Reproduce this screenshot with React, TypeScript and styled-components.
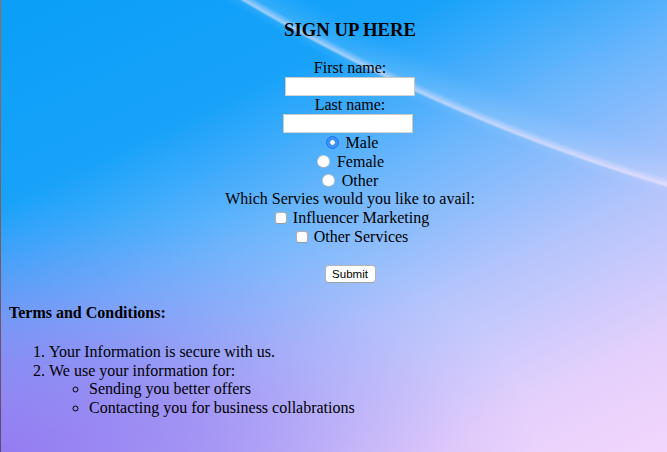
import React from "react";
import styled, { createGlobalStyle } from "styled-components";

const GlobalStyle = createGlobalStyle`
  html, body {
    margin: 0;
    padding: 0;
  }
  body {
    font-family: "Liberation Serif", "Times New Roman", serif;
    font-size: 16px;
    color: #000;
  }
`;

const Page = styled.div`
  box-sizing: border-box;
  width: 100%;
  height: 452px;
  overflow: hidden;
  padding: 19px 8px 0 9px;
  background:
    linear-gradient(to bottom, #a06a52, #7a5860 60%, #5a4a70) 0 0 / 1px 100% no-repeat,
    radial-gradient(
      circle 1903px at 1212px -1637px,
      rgba(255, 255, 255, 0) 1870px,
      rgba(235, 240, 255, 0.14) 1895px,
      rgba(255, 236, 255, 0.6) 1902px,
      rgba(255, 255, 255, 0.08) 1904.5px,
      rgba(255, 255, 255, 0) 1912px
    ),
    radial-gradient(
      ellipse 540px 250px at 0% 100%,
      rgba(148, 118, 240, 0.92) 0%,
      rgba(148, 118, 240, 0.62) 38%,
      rgba(148, 118, 240, 0.25) 68%,
      rgba(148, 118, 240, 0.07) 87%,
      rgba(148, 118, 240, 0) 100%
    ),
    linear-gradient(
      155deg,
      #0a9ff8 0%,
      #18a2fa 27%,
      #6cb6fc 46%,
      #b2c4fc 65%,
      #e4d0fc 85%,
      #f2d6fc 100%
    );
`;

const Form = styled.form`
  display: flex;
  flex-direction: column;
  align-items: center;
  padding-left: 32px;
  margin: 0;
`;

const Title = styled.h3`
  margin: 0 0 18px;
  font-size: 18.72px;
  line-height: 22px;
  font-weight: bold;
`;

const Line = styled.div`
  height: 18px;
  line-height: 18px;
  white-space: nowrap;
`;

const TextInput = styled.input<{ $shift?: number }>`
  box-sizing: border-box;
  width: 130px;
  height: 19px;
  margin: 0;
  margin-right: ${(p) => (p.$shift ? p.$shift * 2 : 0)}px;
  border: 1px solid #c9c9c9;
  border-bottom-color: #d4d4d4;
  background: #fff;
  outline: none;
`;

const OptionRow = styled.label<{ $nudge?: number }>`
  display: flex;
  align-items: center;
  height: 19px;
  line-height: 19px;
  white-space: nowrap;
  margin-left: ${(p) => p.$nudge ?? 0}px;
`;

const Radio = styled.input.attrs({ type: "radio" })`
  appearance: none;
  -webkit-appearance: none;
  box-sizing: border-box;
  width: 13px;
  height: 13px;
  margin: 0 7px 0 0;
  border-radius: 50%;
  border: 1px solid rgba(0, 0, 0, 0.18);
  border-bottom-color: rgba(0, 0, 0, 0.3);
  background: #fff;
  &:checked {
    border-color: #1f74e6;
    background: radial-gradient(circle, #fff 0 2px, #3c92f8 2.6px);
  }
`;

const Checkbox = styled.input.attrs({ type: "checkbox" })`
  appearance: none;
  -webkit-appearance: none;
  box-sizing: border-box;
  width: 12px;
  height: 12px;
  margin: 0 6px 0 0;
  border-radius: 3px;
  border: 1px solid #b0b0b0;
  border-bottom-color: #989898;
  background: #fff;
`;

const Spacer = styled.div`
  height: 18px;
`;

const SubmitRow = styled.div`
  display: flex;
  align-items: center;
  height: 20px;
`;

const SubmitButton = styled.button`
  box-sizing: border-box;
  width: 51px;
  height: 18px;
  padding: 0;
  margin: 0;
  border: 1px solid #b4b4b4;
  border-bottom-color: #a0a0a0;
  border-radius: 4px;
  background: #fff;
  font-family: "Liberation Sans", Arial, sans-serif;
  font-size: 11.5px;
  line-height: 16px;
  color: #000;
`;

const TermsTitle = styled.h4`
  margin: 20px 0 0;
  font-size: 16px;
  line-height: 18px;
  font-weight: bold;
`;

const NumberedList = styled.ol`
  margin: 21px 0 0;
  padding-left: 40px;
  line-height: 18.5px;
`;

const BulletList = styled.ul`
  margin: 0;
  padding-left: 40px;
  list-style-type: circle;
`;

export default function App() {
  return (
    <>
      <GlobalStyle />
      <Page>
        <Form onSubmit={(e) => e.preventDefault()}>
          <Title>SIGN UP HERE</Title>
          <Line>First name:</Line>
          <TextInput type="text" name="firstname" />
          <Line>Last name:</Line>
          <TextInput type="text" name="lastname" $shift={2} />
          <OptionRow $nudge={4}>
            <Radio name="gender" value="male" defaultChecked />
            Male
          </OptionRow>
          <OptionRow $nudge={1}>
            <Radio name="gender" value="female" />
            Female
          </OptionRow>
          <OptionRow>
            <Radio name="gender" value="other" />
            Other
          </OptionRow>
          <Line>Which Servies would you like to avail:</Line>
          <OptionRow $nudge={4}>
            <Checkbox name="influencer" />
            Influencer Marketing
          </OptionRow>
          <OptionRow $nudge={4}>
            <Checkbox name="other" />
            Other Services
          </OptionRow>
          <Spacer />
          <SubmitRow>
            <SubmitButton type="submit">Submit</SubmitButton>
          </SubmitRow>
        </Form>
        <TermsTitle>Terms and Conditions:</TermsTitle>
        <NumberedList>
          <li>Your Information is secure with us.</li>
          <li>
            We use your information for:
            <BulletList>
              <li>Sending you better offers</li>
              <li>Contacting you for business collabrations</li>
            </BulletList>
          </li>
        </NumberedList>
      </Page>
    </>
  );
}
